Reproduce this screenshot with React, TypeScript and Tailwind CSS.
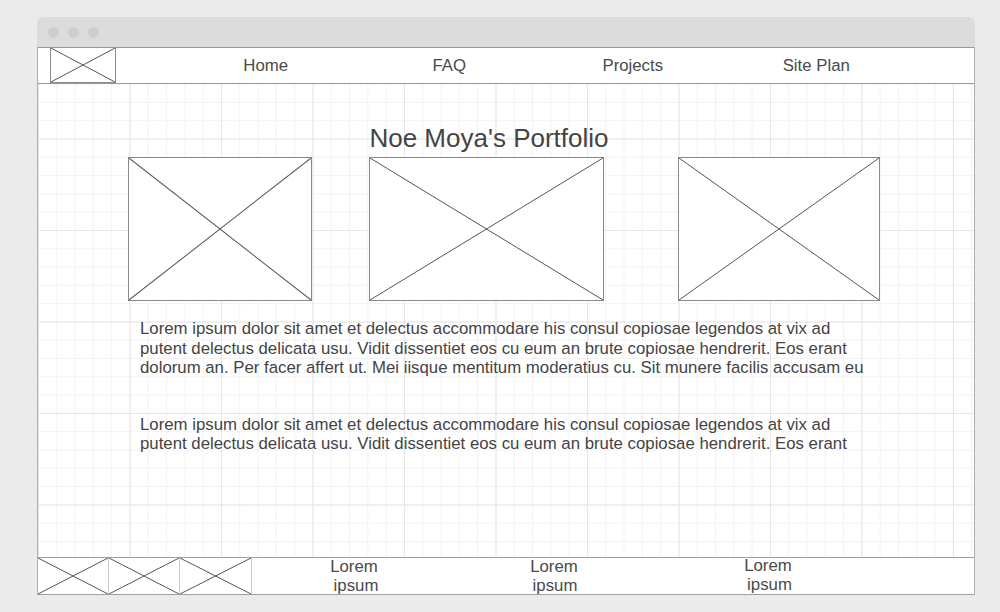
import React from 'react';

function XBox({ className }: { className?: string }) {
  return (
    <div className={`relative bg-white border border-[#8a8a8a] ${className ?? ''}`}>
      <svg className="absolute inset-0 h-full w-full" viewBox="0 0 100 100" preserveAspectRatio="none">
        <line x1="0" y1="0" x2="100" y2="100" stroke="#555" strokeWidth="1" vectorEffect="non-scaling-stroke" />
        <line x1="100" y1="0" x2="0" y2="100" stroke="#555" strokeWidth="1" vectorEffect="non-scaling-stroke" />
      </svg>
    </div>
  );
}

const navItems = ['Home', 'FAQ', 'Projects', 'Site Plan'];

export default function App() {
  return (
    <div className="w-[1000px] h-[612px] bg-[#ebebeb] pt-[17px] pl-[37px] font-['Liberation_Sans',Arial,sans-serif] text-[#444]">
      <div className="w-[938px] h-[578px] flex flex-col">
        {/* title bar */}
        <div className="h-[30px] rounded-t-[6px] bg-[#dcdcdc] flex items-center gap-[9px] pl-[11px] shrink-0">
          <span className="w-[11px] h-[11px] rounded-full bg-[#cecece]" />
          <span className="w-[11px] h-[11px] rounded-full bg-[#cecece]" />
          <span className="w-[11px] h-[11px] rounded-full bg-[#cecece]" />
        </div>

        <div className="flex-1 flex flex-col border-x border-[#b0b0b0] bg-white bg-[linear-gradient(to_right,#e6e6e6_1px,transparent_1px),linear-gradient(to_bottom,#e6e6e6_1px,transparent_1px),linear-gradient(to_right,#f2f2f2_1px,transparent_1px),linear-gradient(to_bottom,#f2f2f2_1px,transparent_1px)] bg-[length:91.5px_91.5px,91.5px_91.5px,18.3px_18.3px,18.3px_18.3px]">
          {/* nav */}
          <div className="h-[37px] shrink-0 bg-white border-t border-b border-[#9a9a9a] flex items-stretch">
            <XBox className="ml-[12px] w-[66px] border-t-0" />
            <div className="flex ml-[58px]">
              {navItems.map((n) => (
                <div key={n} className="w-[183.5px] flex items-center justify-center text-[16.8px] text-[#4a4a4a]">
                  {n}
                </div>
              ))}
            </div>
          </div>

          {/* main */}
          <div className="flex-1 flex flex-col">
            <h1 className="mt-[39px] text-center text-[26px] leading-[30px] text-[#444] pr-[34px]">Noe Moya's Portfolio</h1>
            <div className="flex mt-[4px] ml-[90px]">
              <XBox className="w-[184px] h-[144px]" />
              <XBox className="ml-[57px] w-[235px] h-[144px]" />
              <XBox className="ml-[74px] w-[202px] h-[144px]" />
            </div>
            <p className="ml-[102px] mt-[18px] text-[16.8px] leading-[19.5px] text-[#444]">
              Lorem ipsum dolor sit amet et delectus accommodare his consul copiosae legendos at vix ad
              <br />
              putent delectus delicata usu. Vidit dissentiet eos cu eum an brute copiosae hendrerit. Eos erant
              <br />
              dolorum an. Per facer affert ut. Mei iisque mentitum moderatius cu. Sit munere facilis accusam eu
            </p>
            <p className="ml-[102px] mt-[37px] text-[16.8px] leading-[19.5px] text-[#444]">
              Lorem ipsum dolor sit amet et delectus accommodare his consul copiosae legendos at vix ad
              <br />
              putent delectus delicata usu. Vidit dissentiet eos cu eum an brute copiosae hendrerit. Eos erant
            </p>
          </div>

          {/* footer */}
          <div className="h-[38px] shrink-0 bg-white border-t border-b border-[#a0a0a0] flex">
            <XBox className="w-[71px] border-0 border-r border-[#c8c8c8]" />
            <XBox className="w-[71px] border-0 border-r border-[#c8c8c8]" />
            <XBox className="w-[72px] border-0 border-r border-[#c8c8c8]" />
            <div className="flex text-[16.8px] leading-[19px] text-[#4a4a4a]">
              <div className="w-[200px] flex flex-col items-center justify-center ml-[2px]">
                <span>Lorem</span>
                <span className="pl-[4px]">ipsum</span>
              </div>
              <div className="w-[200px] flex flex-col items-center justify-center">
                <span>Lorem</span>
                <span className="pl-[2px]">ipsum</span>
              </div>
              <div className="w-[228px] flex flex-col items-center justify-center -mt-[2px]">
                <span>Lorem</span>
                <span className="pl-[3px]">ipsum</span>
              </div>
            </div>
          </div>
        </div>
      </div>
    </div>
  );
}
